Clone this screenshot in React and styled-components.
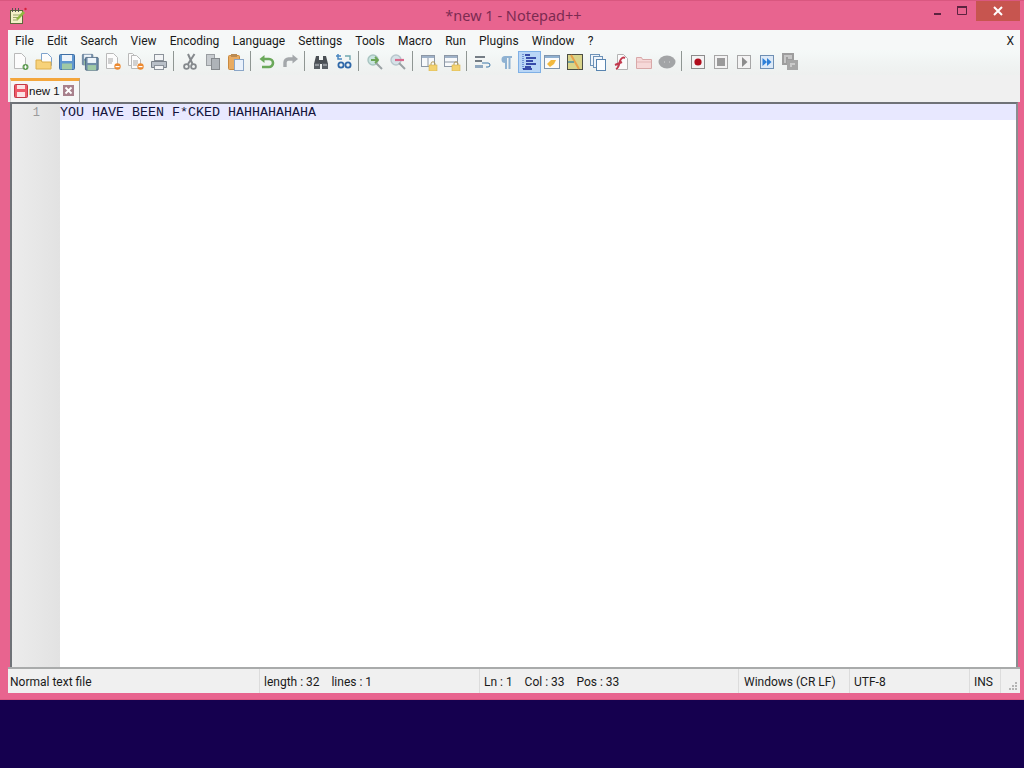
import React from "react";
import styled, { createGlobalStyle } from "styled-components";

const GlobalStyle = createGlobalStyle`
html, body { margin: 0; padding: 0; background: #15004f; }
body { font-family: Roboto, "Noto Sans", sans-serif; overflow: hidden; }
`;

const Desktop = styled.div`
width: 1024px;
height: 768px;
background: #15004f;
`;

const Win = styled.div`
width: 1024px;
height: 700px;
box-sizing: border-box;
background: #e8648f;
border-top: 1px solid #d9577f;
border-bottom: 1px solid #d9577f;
display: flex;
flex-direction: column;
padding: 0 4px 6px 8px;
`;

const TitleBar = styled.div`
height: 29px;
margin: 0 -4px 0 -8px;
flex: none;
display: grid;
grid-template-columns: 1fr auto 1fr;
align-items: start;
`;

const TitleLeft = styled.div`
padding: 6px 0 0 9px;
`;

const TitleText = styled.div`
font-family: "Noto Sans", sans-serif;
font-size: 14.5px;
line-height: 20px;
margin-top: 4px;
margin-left: 3px;
color: #7c2b52;
`;

const Controls = styled.div`
display: flex;
justify-content: flex-end;
padding-right: 4px;
`;

const Ctrl = styled.div`
width: ${p => p.$w}px;
height: 20px;
display: flex;
align-items: center;
justify-content: center;
background: ${p => p.$close ? "#c7554f" : "transparent"};
`;

const MenuBar = styled.div`
height: 20px;
flex: none;
box-sizing: border-box;
padding: 2px 0 0 0.4px;
background: #f6f8f8;
display: flex;
align-items: center;
font-size: 12px;
color: #1a1a1a;
`;

const MenuItem = styled.span`
padding: 0 6.6px;
line-height: 18px;
white-space: nowrap;
`;

const MenuClose = styled.span`
margin-left: auto;
padding-right: 6px;
font-size: 12px;
`;

const ToolBar = styled.div`
height: 25px;
flex: none;
box-sizing: border-box;
background: linear-gradient(#f5f9f8, #f0f3f2 60%, #eef0ef);
display: flex;
align-items: flex-start;
padding: 1px 0 0 1.5px;
`;

const ToolBtn = styled.div`
width: 23px;
height: 22px;
flex: none;
box-sizing: border-box;
display: flex;
align-items: center;
justify-content: center;
background: ${p => p.$on ? "#b9d6f6" : "transparent"};
border: 1px solid ${p => p.$on ? "#7fb0e6" : "transparent"};
`;

const ToolSep = styled.div`
width: 8px;
height: 20px;
flex: none;
box-sizing: border-box;
padding-left: 2.5px;
display: flex;
&::before {
  content: "";
  width: 1px;
  background: #8f9693;
}
`;

const TabBar = styled.div`
height: 27px;
flex: none;
background: #f0f0f0;
display: flex;
align-items: flex-end;
padding-left: 2px;
`;

const Tab = styled.div`
width: 70px;
height: 24px;
box-sizing: border-box;
background: #f6f6f6;
border-top: 3px solid #f4a63c;
border-right: 1px solid #a0a0a0;
border-left: 1px solid #d8d8d8;
display: flex;
align-items: center;
padding: 0 0 2px 3px;
font-family: "Liberation Sans", sans-serif;
font-size: 11.5px;
color: #111;
`;

const TabLabel = styled.span`
margin: 0 3px 0 1px;
white-space: nowrap;
`;

const Editor = styled.div`
flex: 1;
margin: 0 2px;
box-sizing: border-box;
border-top: 2px solid #6f7277;
border-left: 2px solid #6f7277;
border-right: 2px solid #8a8d90;
background: #fff;
display: flex;
min-height: 0;
`;

const Gutter = styled.div`
width: 48px;
flex: none;
background: linear-gradient(90deg, #ececec, #e2e2e2);
font-family: "Liberation Mono", monospace;
font-size: 12px;
line-height: 16px;
color: #9a9a9a;
text-align: right;
padding: 1px 20px 0 0;
box-sizing: border-box;
`;

const CodeArea = styled.div`
flex: 1;
min-width: 0;
`;

const CodeLine = styled.div`
height: 16px;
box-sizing: border-box;
padding-top: 1px;
background: #e8e8ff;
font-family: "Liberation Mono", monospace;
font-size: 13.33px;
line-height: 16px;
color: #14143c;
white-space: pre;
`;

const StatusBar = styled.div`
height: 26px;
flex: none;
box-sizing: border-box;
border-top: 2px solid #a9abab;
background: #f0f0f0;
display: flex;
font-size: 12px;
color: #1a1a1a;
`;

const Pane = styled.div`
width: ${p => p.$w}px;
flex: none;
box-sizing: border-box;
padding: 1px 0 0 ${p => p.$pad ?? 4}px;
line-height: 24px;
border-right: 1px solid #dcdcdc;
white-space: pre;
`;

const Grip = styled.div`
flex: 1;
display: flex;
align-items: flex-end;
justify-content: flex-end;
padding: 0 2px 2px 0;
`;

const Icon = ({ size = 18, children }) => (
  <svg width={size} height={size} viewBox="0 0 18 18">{children}</svg>
);

const Badge = ({ color }) => (
  <g>
    <circle cx="13.5" cy="13.5" r="3.2" fill={color} />
    <rect x="11.5" y="13" width="4" height="1.2" fill="#fff" />
  </g>
);

const Doc = ({ x = 3, y = 1, w = 10, h = 14, stroke = "#b9b9b9", lines }) => (
  <g>
    <path d={`M${x + .5} ${y + .5}h${w - 4}l4 4v${h - 4}h${-w}z`} fill="#fcfcfc" stroke={stroke} />
    {lines && <path d={`M${x + 2} ${y + 6}h5M${x + 2} ${y + 8}h5M${x + 2} ${y + 10}h4`} stroke="#a5a5a5" />}
  </g>
);

const Floppy = ({ x, y, s, c1, c2 }) => (
  <g transform={`translate(${x} ${y}) scale(${s})`}>
    <rect x=".5" y=".5" width="15" height="15" rx="1" fill={c1} stroke={c2} />
    <rect x="3" y="1" width="10" height="6" fill="#eef4fa" />
    <rect x="3" y="9.5" width="10" height="6" fill="#9fc9a6" />
  </g>
);

const Lock = ({ x = 9, y = 9 }) => (
  <g transform={`translate(${x} ${y})`}>
    <path d="M2 3V1.8a2 2 0 0 1 4 0V3" fill="none" stroke="#b29a58" />
    <rect x="0" y="3" width="8" height="6" fill="#f3d270" stroke="#d8b24c" strokeWidth=".6" />
  </g>
);

const MiniWin = ({ vertical }) => (
  <g>
    <rect x="1.5" y="2.5" width="13" height="11" fill="#f7f9fb" stroke="#8c97a5" />
    <rect x="2" y="3" width="12" height="2" fill="#9fb2c8" />
    {vertical ? <path d="M8 5v8" stroke="#8c97a5" /> : <path d="M2 9h12" stroke="#8c97a5" />}
  </g>
);

const icons = {
  new: <Icon><Doc x={2} y={0} w={11} h={15} /><circle cx="13.5" cy="14" r="3" fill="#5f9b52" /><path d="M11.8 14h3.4M13.5 12.3v3.4" stroke="#fff" /></Icon>,
  open: <Icon><Doc x={6} y={0} w={10} h={12} stroke="#7ea3cc" /><path d="M1 7h5l1 2h9v7H1z" fill="#f7d27a" stroke="#dcae4d" /></Icon>,
  save: <Icon><Floppy x={1} y={1} s={1} c1="#5f97cf" c2="#3f6fa5" /></Icon>,
  saveall: <Icon><Floppy x={1} y={1} s={.7} c1="#7d97b0" c2="#56708c" /><Floppy x={4} y={4} s={.85} c1="#6f8da8" c2="#465f78" /></Icon>,
  close: <Icon><Doc x={2} y={0} w={11} h={15} lines /><Badge color="#ec8a32" /></Icon>,
  closeall: <Icon><Doc x={1} y={0} w={8} h={12} /><Doc x={4} y={2} w={9} h={13} lines /><Badge color="#ec8a32" /></Icon>,
  print: <Icon><rect x="4.5" y="1.5" width="9" height="6" fill="#f2f4f6" stroke="#8b929a" /><path d="M1.5 8.5h15v6h-15z" fill="#b9c0c8" stroke="#7b828a" /><rect x="4.5" y="12.5" width="9" height="4" fill="#f4f5f6" stroke="#8b929a" /></Icon>,
  cut: <Icon><path d="M13.5 1 7 11M7 1l4.5 10" stroke="#85898d" strokeWidth="2" /><circle cx="5.5" cy="13.5" r="2.4" fill="none" stroke="#85898d" strokeWidth="1.8" /><circle cx="12.5" cy="13.5" r="2.4" fill="none" stroke="#85898d" strokeWidth="1.8" /></Icon>,
  copy: <Icon><rect x="2.5" y="1.5" width="8" height="11" fill="#c7cbcf" stroke="#9a9ea2" /><rect x="7.5" y="5.5" width="8" height="11" fill="#aeb3b8" stroke="#85898d" /></Icon>,
  paste: <Icon><rect x="1.5" y="2.5" width="11" height="14" rx="1" fill="#e8ab62" stroke="#c98a3f" /><rect x="4" y="1" width="6" height="3" fill="#b98a52" /><rect x="7.5" y="6.5" width="9" height="11" fill="#e9f1fb" stroke="#8aa5c7" /></Icon>,
  undo: <Icon><path d="M5 6h6a3.5 3.5 0 0 1 0 8H4" fill="none" stroke="#6aa85a" strokeWidth="2.6" /><path d="M6.5 2 1.5 6l5 4z" fill="#6aa85a" /></Icon>,
  redo: <Icon><path d="M13 6H7.5a3.5 3.5 0 0 0-3.5 3.5V14" fill="none" stroke="#a4a8ab" strokeWidth="3.4" /><path d="M11.5 1.5 17 6l-5.5 4.5z" fill="#a4a8ab" /></Icon>,
  find: <Icon><path d="M4 3h3v4h4V3h3l2 8H2z" fill="#4a4f54" /><rect x="2" y="10" width="6" height="6" fill="#585e64" /><rect x="10" y="10" width="6" height="6" fill="#585e64" /><path d="M3 12h4M11 12h4" stroke="#c8ccd0" /></Icon>,
  replace: <Icon><path d="M3 1v5h4M1 3h5" fill="none" stroke="#4a86c0" strokeWidth="1.5" /><circle cx="6" cy="12" r="2.6" fill="none" stroke="#2f68a8" strokeWidth="1.8" /><circle cx="13" cy="12" r="2.6" fill="none" stroke="#2f68a8" strokeWidth="1.8" /><path d="M10 3h5v4" fill="none" stroke="#6fa8b0" strokeWidth="1.4" /></Icon>,
  zoomin: <Icon><circle cx="7" cy="7" r="5" fill="#c9e4e0" stroke="#a8c4c0" strokeWidth="1.4" /><path d="M10 10l6 6" stroke="#9aa2a5" strokeWidth="2" /><path d="M5 7h7M9 4l3 3-3 3" fill="none" stroke="#6ca455" strokeWidth="1.8" /></Icon>,
  zoomout: <Icon><circle cx="7" cy="7" r="5" fill="#d6e2e8" stroke="#b8c6cc" strokeWidth="1.4" /><path d="M10 10l6 6" stroke="#9aa2a5" strokeWidth="2" /><path d="M6 7h9" stroke="#d86a8c" strokeWidth="2.2" /></Icon>,
  syncv: <Icon><MiniWin vertical /><Lock /></Icon>,
  synch: <Icon><MiniWin /><Lock /></Icon>,
  wrap: <Icon><path d="M1 4h10M1 8h7" stroke="#4b5560" strokeWidth="1.4" /><path d="M8 10h6a1.5 1.5 0 0 1 0 4h-2" fill="none" stroke="#3f78a8" /><path d="M1 12h8v3H1z" fill="#8fa8c0" /></Icon>,
  para: <Icon><path d="M8 3h7v2h-1.5v11h-2V5H10v11H8v-6a3.5 3.5 0 0 1 0-7z" fill="#8fb2d2" /></Icon>,
  indent: <Icon><path d="M3 1v16" stroke="#2a4fb0" strokeDasharray="1 1" /><path d="M5 2h5M6 5h10M6 8h7M6 11h10M5 14h6M3 16h9" stroke="#0d1f90" strokeWidth="1.5" /></Icon>,
  lang: <Icon><rect x="1.5" y="2.5" width="15" height="13" fill="#fbfbfb" stroke="#7f95ad" /><rect x="2" y="3" width="14" height="2" fill="#8fb0d0" /><path d="M4 11l4-4h5l-2 4-4 3z" fill="#f2b93f" /></Icon>,
  map: <Icon><rect x="1.5" y="1.5" width="15" height="15" fill="#d9d48a" stroke="#4c4f45" /><path d="M5 2l8 14" stroke="#e8a04a" strokeWidth="2" /><path d="M2 9h6" stroke="#6f9f9a" strokeWidth="2" /></Icon>,
  list: <Icon><rect x="1.5" y="1.5" width="9" height="11" fill="#eef4fa" stroke="#6e93b8" /><rect x="4.5" y="3.5" width="9" height="11" fill="#eef4fa" stroke="#6e93b8" /><rect x="7.5" y="6.5" width="9" height="11" fill="#fbfdff" stroke="#5884b0" /></Icon>,
  func: <Icon><path d="M5.5 1.5h6l4 4v11h-10z" fill="#fbfbfb" stroke="#b3b3b3" /><path d="M4 16c3-1 3-5 4-8s3-4 5-3M3 12l7-3" fill="none" stroke="#c23a4e" strokeWidth="2" /></Icon>,
  folder: <Icon><path d="M1.5 4.5h5l1 2h9v9h-15z" fill="#f6d8d8" stroke="#d8a8a8" /><path d="M2 9h14" stroke="#e2b6b6" /></Icon>,
  monitor: <Icon><ellipse cx="9" cy="9" rx="8.5" ry="6.5" fill="#a2a4a6" /><path d="M6 9h1M11 9h1" stroke="#d5d5d5" /></Icon>,
  rec: <Icon><rect x="2.5" y="2.5" width="13" height="13" fill="#f3f3f3" stroke="#8c8c8c" /><circle cx="9" cy="9" r="3.6" fill="#b00d1c" /></Icon>,
  stop: <Icon><rect x="2.5" y="2.5" width="13" height="13" fill="#f3f3f3" stroke="#a6a6a6" /><rect x="5" y="5" width="8" height="8" fill="#9a9a9a" /></Icon>,
  play: <Icon><rect x="2.5" y="2.5" width="13" height="13" fill="#f3f3f3" stroke="#a6a6a6" /><path d="M7 4l5.5 5L7 14z" fill="#8c8c8c" /></Icon>,
  playn: <Icon><rect x="2.5" y="2.5" width="13" height="13" fill="#dce9f7" stroke="#6f8fb3" /><path d="M4.5 5l4.5 4-4.5 4zM9 5l4.5 4L9 13z" fill="#2d7fd8" /></Icon>,
  savem: <Icon><rect x="1" y="0" width="12" height="12" fill="#9d9d9d" /><path d="M3 3h8M3 5h2M7 5h4M3 7h2M3 9h2" stroke="#eee" /><rect x="6" y="7" width="11" height="10" fill="#a6a6a6" /><path d="M9 11h5M9 13h2" stroke="#eee" /></Icon>,
};

const toolbar = [
  "new", "open", "save", "saveall", "close", "closeall", "print", "|",
  "cut", "copy", "paste", "|", "undo", "redo", "|", "find", "replace", "|",
  "zoomin", "zoomout", "|", "syncv", "synch", "|", "wrap", "para", "indent",
  "lang", "map", "list", "func", "folder", "monitor", "|",
  "rec", "stop", "play", "playn", "savem",
];

const menus = ["File", "Edit", "Search", "View", "Encoding", "Language", "Settings", "Tools", "Macro", "Run", "Plugins", "Window", "?"];

const panes = [
  { w: 252, pad: 2, text: "Normal text file" },
  { w: 220, text: "length : 32    lines : 1" },
  { w: 259, text: "Ln : 1    Col : 33    Pos : 33" },
  { w: 111, pad: 5, text: "Windows (CR LF)" },
  { w: 120, text: "UTF-8" },
  { w: 31, text: "INS" },
];

const AppIcon = () => (
  <svg width="18" height="18" viewBox="0 0 18 18">
    <rect x="1.5" y="3.5" width="12" height="13" fill="#f4f0c8" stroke="#5c6a3a" />
    <path d="M3.5 1v4M6.5 1v4M9.5 1v4" stroke="#555" />
    <path d="M4 8h7M4 10.5h7M4 13h5" stroke="#9aa86a" />
    <path d="M7 12 14 4l2 2-7 7z" fill="#8fb83f" />
    <circle cx="16.5" cy="2" r="1.2" fill="#d8203a" />
  </svg>
);

const SaveRed = () => (
  <svg width="14" height="14" viewBox="0 0 14 14">
    <rect x=".5" y=".5" width="13" height="13" rx="1" fill="#ee5a68" stroke="#c23a48" />
    <rect x="3" y="1" width="8" height="4" fill="#fbe3e5" />
    <rect x="3" y="8" width="8" height="5" fill="#fbe3e5" />
  </svg>
);

const TabClose = () => (
  <svg width="11" height="11" viewBox="0 0 11 11">
    <rect width="11" height="11" fill="#a8808c" />
    <path d="M2.5 2.5l6 6M8.5 2.5l-6 6" stroke="#fff" strokeWidth="1.8" />
  </svg>
);

const GripDots = () => (
  <svg width="10" height="10" viewBox="0 0 10 10" fill="#b4b4b4">
    <rect x="7" y="1" width="2" height="2" />
    <rect x="4" y="4" width="2" height="2" /><rect x="7" y="4" width="2" height="2" />
    <rect x="1" y="7" width="2" height="2" /><rect x="4" y="7" width="2" height="2" /><rect x="7" y="7" width="2" height="2" />
  </svg>
);

export default function App() {
  return (
    <Desktop>
      <GlobalStyle />
      <Win>
        <TitleBar>
          <TitleLeft><AppIcon /></TitleLeft>
          <TitleText>*new 1 - Notepad++</TitleText>
          <Controls>
            <Ctrl $w={30}>
              <svg width="10" height="10" viewBox="0 0 10 10"><rect y="7" width="7" height="2" fill="#5c2340" /></svg>
            </Ctrl>
            <Ctrl $w={16}>
              <svg width="10" height="10" viewBox="0 0 10 10"><path d="M.5 1.5h9v7h-9z" fill="none" stroke="#5c2340" /><rect width="10" height="2" y="0" fill="#5c2340" /></svg>
            </Ctrl>
            <Ctrl $w={6} />
            <Ctrl $w={44} $close>
              <svg width="10" height="10" viewBox="0 0 10 10"><path d="M1 1l8 8M9 1l-8 8" stroke="#fff" strokeWidth="2" /></svg>
            </Ctrl>
          </Controls>
        </TitleBar>
        <MenuBar>
          {menus.map(m => <MenuItem key={m}>{m}</MenuItem>)}
          <MenuClose>X</MenuClose>
        </MenuBar>
        <ToolBar>
          {toolbar.map((t, i) =>
            t === "|" ? <ToolSep key={i} /> : <ToolBtn key={i} $on={t === "indent"}>{icons[t]}</ToolBtn>
          )}
        </ToolBar>
        <TabBar>
          <Tab>
            <SaveRed />
            <TabLabel>new 1</TabLabel>
            <TabClose />
          </Tab>
        </TabBar>
        <Editor>
          <Gutter>1</Gutter>
          <CodeArea>
            <CodeLine>YOU HAVE BEEN F*CKED HAHHAHAHAHA</CodeLine>
          </CodeArea>
        </Editor>
        <StatusBar>
          {panes.map(p => <Pane key={p.text} $w={p.w} $pad={p.pad}>{p.text}</Pane>)}
          <Grip><GripDots /></Grip>
        </StatusBar>
      </Win>
    </Desktop>
  );
}
